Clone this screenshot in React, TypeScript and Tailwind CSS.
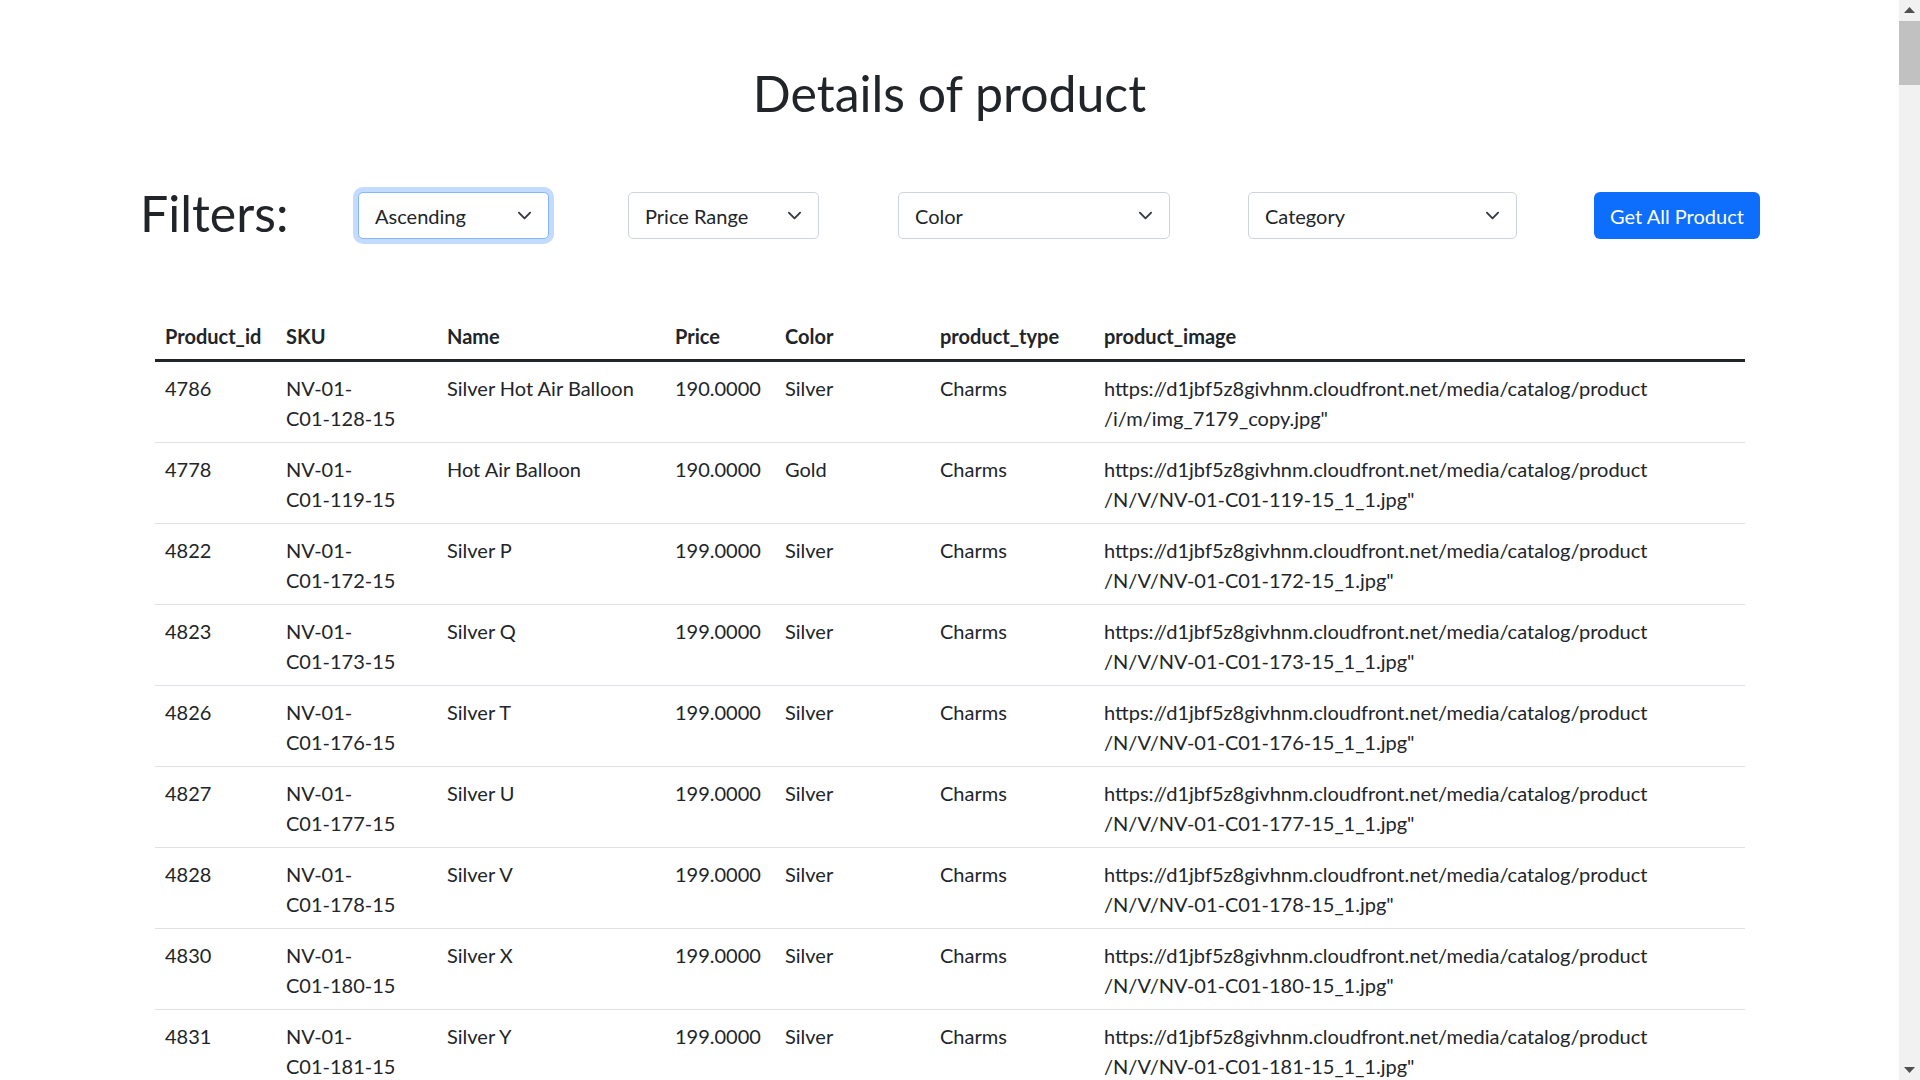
import { useState } from 'react'

type Product = {
  id: number
  sku: string
  name: string
  price: string
  color: string
  type: string
  image: string
}

const CDN = 'https://d1jbf5z8givhnm.cloudfront.net/media/catalog/product'

const products: Product[] = [
  { id: 4786, sku: 'NV-01-C01-128-15', name: 'Silver Hot Air Balloon', price: '190.0000', color: 'Silver', type: 'Charms', image: '/i/m/img_7179_copy.jpg"' },
  { id: 4778, sku: 'NV-01-C01-119-15', name: 'Hot Air Balloon', price: '190.0000', color: 'Gold', type: 'Charms', image: '/N/V/NV-01-C01-119-15_1_1.jpg"' },
  { id: 4822, sku: 'NV-01-C01-172-15', name: 'Silver P', price: '199.0000', color: 'Silver', type: 'Charms', image: '/N/V/NV-01-C01-172-15_1.jpg"' },
  { id: 4823, sku: 'NV-01-C01-173-15', name: 'Silver Q', price: '199.0000', color: 'Silver', type: 'Charms', image: '/N/V/NV-01-C01-173-15_1_1.jpg"' },
  { id: 4826, sku: 'NV-01-C01-176-15', name: 'Silver T', price: '199.0000', color: 'Silver', type: 'Charms', image: '/N/V/NV-01-C01-176-15_1_1.jpg"' },
  { id: 4827, sku: 'NV-01-C01-177-15', name: 'Silver U', price: '199.0000', color: 'Silver', type: 'Charms', image: '/N/V/NV-01-C01-177-15_1_1.jpg"' },
  { id: 4828, sku: 'NV-01-C01-178-15', name: 'Silver V', price: '199.0000', color: 'Silver', type: 'Charms', image: '/N/V/NV-01-C01-178-15_1.jpg"' },
  { id: 4830, sku: 'NV-01-C01-180-15', name: 'Silver X', price: '199.0000', color: 'Silver', type: 'Charms', image: '/N/V/NV-01-C01-180-15_1.jpg"' },
  { id: 4831, sku: 'NV-01-C01-181-15', name: 'Silver Y', price: '199.0000', color: 'Silver', type: 'Charms', image: '/N/V/NV-01-C01-181-15_1_1.jpg"' },
  { id: 4832, sku: 'NV-01-C01-182-15', name: 'Silver Z', price: '199.0000', color: 'Silver', type: 'Charms', image: '/N/V/NV-01-C01-182-15_1.jpg"' },
]

function Chevron() {
  return (
    <svg width="15" height="15" viewBox="0 0 16 16" fill="none" aria-hidden="true">
      <path d="m2 5 6 6 6-6" stroke="#343a40" strokeWidth="2" strokeLinecap="round" strokeLinejoin="round" />
    </svg>
  )
}

function FilterSelect({ label, width, focused }: { label: string; width: string; focused?: boolean }) {
  return (
    <button
      type="button"
      className={
        'mt-[9px] flex h-[47px] items-center justify-between rounded-[5px] border bg-white pl-[16px] pr-[16px] text-[20px] leading-[30px] ' +
        width +
        (focused ? ' border-[#86b7fe] shadow-[0_0_0_5px_rgba(13,110,253,0.25)]' : ' border-[#ced4da]')
      }
    >
      <span>{label}</span>
      <Chevron />
    </button>
  )
}

export default function App() {
  const [sort] = useState('Ascending')

  return (
    <div className="flex h-[1080px] overflow-hidden bg-white font-['Segoe_UI',Lato,'Liberation_Sans',sans-serif] text-[#212529]">
      <main className="min-w-0 flex-1">
        <h1 className="pt-[63px] text-center text-[50px] leading-[60px]">Details of product</h1>

        <div className="mt-[60px] flex items-start pl-[140px]">
          <h1 className="w-[218px] text-[50px] leading-[60px]">Filters:</h1>
          <FilterSelect label={sort} width="w-[191px]" focused />
          <div className="w-[79px]" />
          <FilterSelect label="Price Range" width="w-[191px]" />
          <div className="w-[79px]" />
          <FilterSelect label="Color" width="w-[272px]" />
          <div className="w-[78px]" />
          <FilterSelect label="Category" width="w-[269px]" />
          <div className="w-[77px]" />
          <button
            type="button"
            className="mt-[9px] h-[47px] w-[166px] rounded-[6px] bg-[#0d6efd] text-[20px] leading-[30px] text-white"
          >
            Get All Product
          </button>
        </div>

        <table className="ml-[155px] mt-[66px] w-[1590px] table-fixed border-collapse text-left text-[20px] leading-[30px]">
          <colgroup>
            <col className="w-[121px]" />
            <col className="w-[161px]" />
            <col className="w-[228px]" />
            <col className="w-[110px]" />
            <col className="w-[155px]" />
            <col className="w-[164px]" />
            <col />
          </colgroup>
          <thead>
            <tr className="border-b-[3px] border-[#212529]">
              {['Product_id', 'SKU', 'Name', 'Price', 'Color', 'product_type', 'product_image'].map((h) => (
                <th key={h} className="px-[10px] pb-[8px] pt-[12px] font-bold whitespace-nowrap">
                  {h}
                </th>
              ))}
            </tr>
          </thead>
          <tbody>
            {products.map((p) => {
              const cut = p.sku.indexOf('-', 3) + 1
              return (
                <tr key={p.id} className="border-b border-[#dee2e6] align-top">
                  <td className="px-[10px] pb-[9px] pt-[11px]">{p.id}</td>
                  <td className="px-[10px] pb-[9px] pt-[11px]">
                    <span className="block">{p.sku.slice(0, cut)}</span>
                    <span className="block">{p.sku.slice(cut)}</span>
                  </td>
                  <td className="px-[10px] pb-[9px] pt-[11px]">{p.name}</td>
                  <td className="px-[10px] pb-[9px] pt-[11px]">{p.price}</td>
                  <td className="px-[10px] pb-[9px] pt-[11px]">{p.color}</td>
                  <td className="px-[10px] pb-[9px] pt-[11px]">{p.type}</td>
                  <td className="px-[10px] pb-[9px] pt-[11px]">
                    <span className="block">{CDN}</span>
                    <span className="block">{p.image}</span>
                  </td>
                </tr>
              )
            })}
          </tbody>
        </table>
      </main>

      <div className="flex w-[21px] flex-col bg-[#f1f1f1]">
        <div className="flex h-[21px] items-start justify-center pt-[7px]">
          <svg width="11" height="6" viewBox="0 0 11 6" aria-hidden="true">
            <path d="M0 6 5.5 0 11 6Z" fill="#505050" />
          </svg>
        </div>
        <div className="h-[64px] bg-[#c1c1c1]" />
        <div className="flex-1" />
        <div className="flex h-[21px] items-end justify-center pb-[7px]">
          <svg width="11" height="6" viewBox="0 0 11 6" aria-hidden="true">
            <path d="M0 0 5.5 6 11 0Z" fill="#505050" />
          </svg>
        </div>
      </div>
    </div>
  )
}
